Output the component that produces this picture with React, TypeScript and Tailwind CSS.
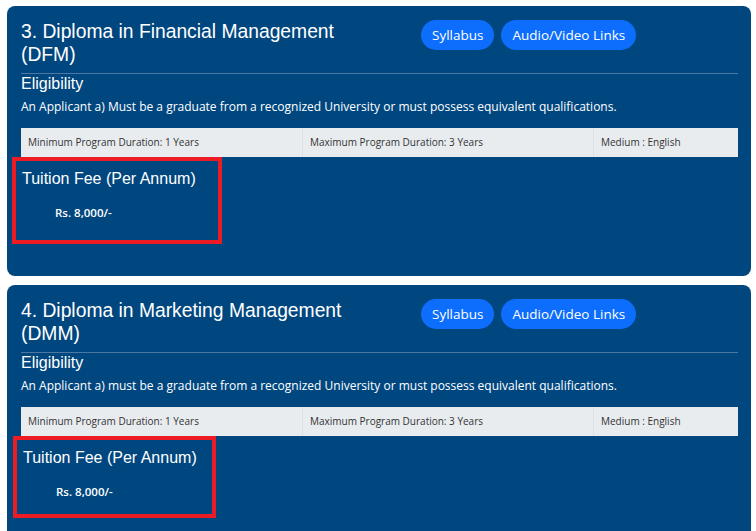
const body = '"Open Sans", "Noto Sans", sans-serif'
const head = '"Liberation Sans", Arial, sans-serif'

type Program = {
  title: string
  short: string
  eligibility: string
  frame: string
}

const programs: Program[] = [
  {
    title: "3. Diploma in Financial Management",
    short: "(DFM)",
    eligibility:
      "An Applicant a) Must be a graduate from a recognized University or must possess equivalent qualifications.",
    frame: "ml-[-9px] w-[210px] h-[87px]",
  },
  {
    title: "4. Diploma in Marketing Management",
    short: "(DMM)",
    eligibility:
      "An Applicant a) must be a graduate from a recognized University or must possess equivalent qualifications.",
    frame: "ml-[-8px] w-[203px] h-[82px]",
  },
]

function ProgramCard({ p }: { p: Program }) {
  return (
    <section className="h-[270px] rounded-lg bg-[#01477f] pl-[14px] pr-[13px] pt-[14px] text-white">
      <div className="flex border-b border-[#4b77a3] pb-[7px]">
        <h2 className="w-[400px] text-[19.3px] leading-[23px]" style={{ fontFamily: head }}>
          {p.title}
          <br />
          {p.short}
        </h2>
        <div className="flex gap-[7px]" style={{ fontFamily: body }}>
          <button className="h-[30px] rounded-full bg-[#0d6efd] px-[11px] text-[13.5px] text-white">Syllabus</button>
          <button className="h-[30px] rounded-full bg-[#0d6efd] px-[11px] text-[13.5px] text-white">
            Audio/Video Links
          </button>
        </div>
      </div>

      <h3 className="text-[16px] leading-[19px]" style={{ fontFamily: head }}>
        Eligibility
      </h3>
      <p className="mt-[6px] text-[12px] leading-[16px]" style={{ fontFamily: body }}>
        {p.eligibility}
      </p>

      <div
        className="mt-[13px] grid h-[29px] grid-cols-[282px_291px_1fr] bg-[#e9ecef] text-[10px] text-[#333]"
        style={{ fontFamily: body }}
      >
        <div className="flex items-center border-r border-[#dcdfe3] pl-[7px]">Minimum Program Duration: 1 Years</div>
        <div className="flex items-center border-r border-[#dcdfe3] pl-[7px]">Maximum Program Duration: 3 Years</div>
        <div className="flex items-center pl-[7px]">Medium : English</div>
      </div>

      <div className={`border-4 border-[#ed1c24] pl-[6px] pt-[8px] ${p.frame}`}>
        <h3 className="text-[16px] leading-[19px]" style={{ fontFamily: head }}>
          Tuition Fee (Per Annum)
        </h3>
        <p className="mt-[16px] pl-[33px] text-[11.5px] font-semibold" style={{ fontFamily: body }}>
          Rs. 8,000/-
        </p>
      </div>
    </section>
  )
}

export default function App() {
  return (
    <main className="h-[531px] overflow-hidden bg-white pl-[7px] pr-[5px] pt-[6px]">
      <div className="flex flex-col gap-[9px]">
        {programs.map((p) => (
          <ProgramCard key={p.short} p={p} />
        ))}
      </div>
    </main>
  )
}
